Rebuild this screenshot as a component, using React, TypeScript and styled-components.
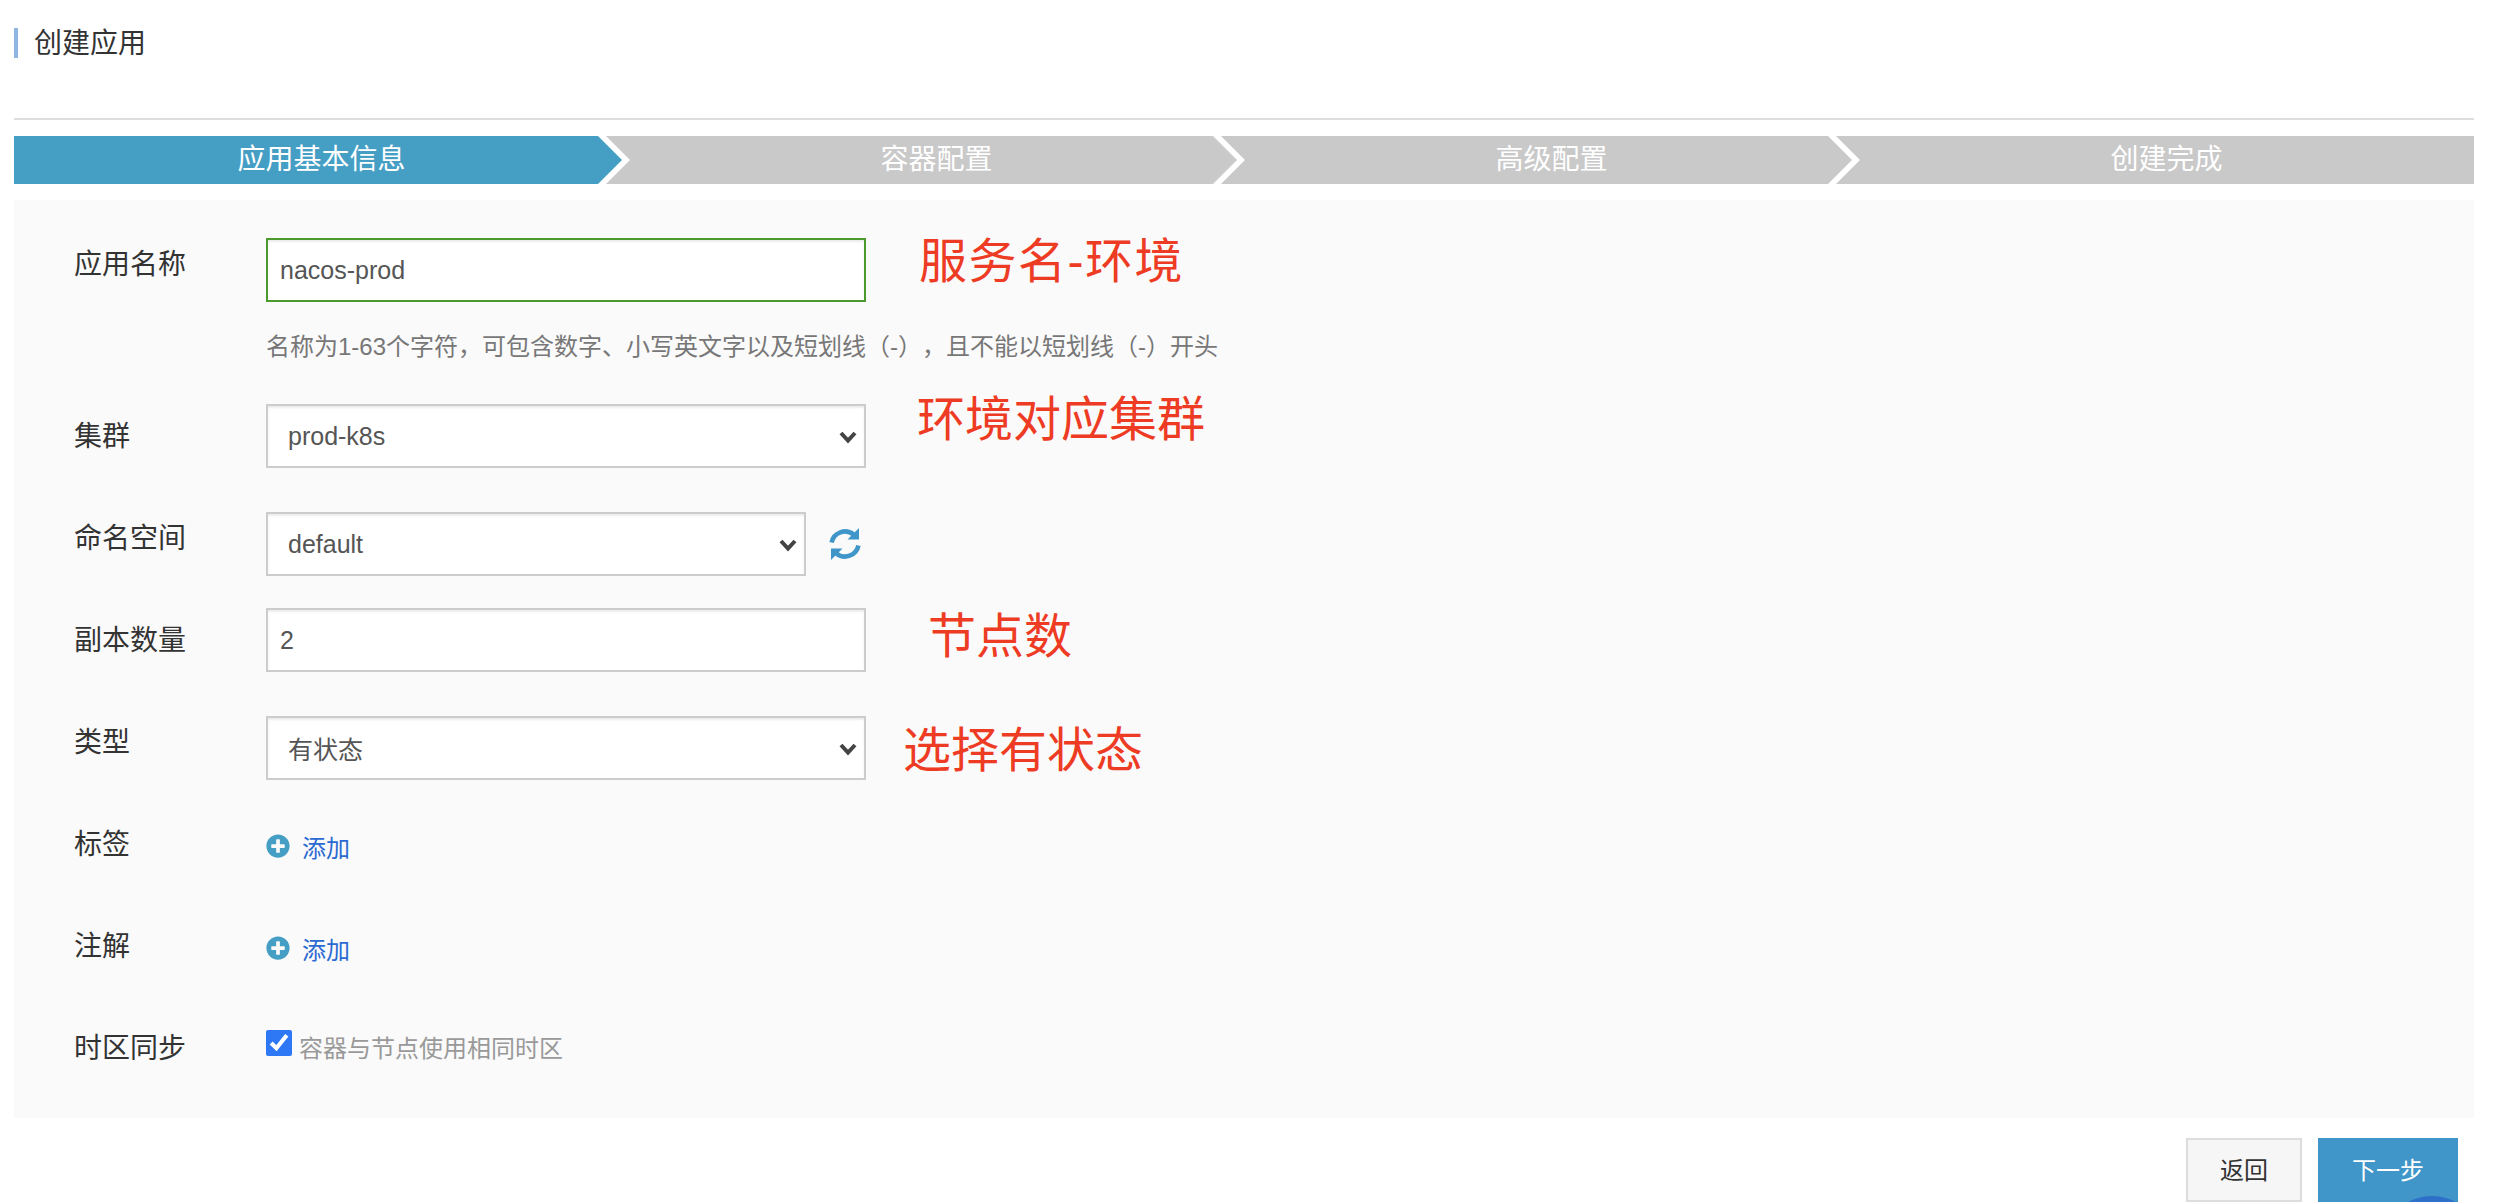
import React from 'react';
import styled, { createGlobalStyle } from 'styled-components';
import { FaPlusCircle } from 'react-icons/fa';

const GlobalStyle = createGlobalStyle`
  html, body {
    margin: 0;
    height: 1202px;
    overflow: hidden;
    background: #fff;
  }
  body {
    font-family: "Liberation Sans", "Noto Sans CJK SC", sans-serif;
    color: #333;
  }
`;

const Page = styled.div`
  padding: 28px 20px 0 14px;
`;

const Title = styled.h1`
  margin: 0;
  height: 30px;
  padding-left: 16px;
  border-left: 4px solid #8fb6e2;
  font-size: 28px;
  font-weight: normal;
  line-height: 32px;
  color: #333;
`;

const Divider = styled.div`
  height: 2px;
  margin: 60px 0 16px;
  background: #ddd;
`;

const Steps = styled.div`
  isolation: isolate;
  display: grid;
  grid-template-columns: repeat(4, 1fr);
  height: 48px;
`;

const Step = styled.div<{ $active?: boolean }>`
  position: relative;
  font-size: 28px;
  line-height: 48px;
  text-align: center;
  color: #fff;

  &::before {
    content: '';
    position: absolute;
    z-index: -1;
    top: 0;
    bottom: 0;
    left: -23px;
    right: 7px;
    background: ${p => (p.$active ? '#459ec4' : '#c9c9c9')};
    clip-path: polygon(0 0, calc(100% - 24px) 0, 100% 50%, calc(100% - 24px) 100%, 0 100%, 24px 50%);
  }

  &:first-child::before {
    left: 0;
    clip-path: polygon(0 0, calc(100% - 24px) 0, 100% 50%, calc(100% - 24px) 100%, 0 100%);
  }

  &:last-child::before {
    right: 0;
    clip-path: polygon(0 0, 100% 0, 100% 100%, 0 100%, 24px 50%);
  }
`;

const Panel = styled.div`
  margin-top: 16px;
  padding: 38px 0 42px 60px;
  background: #fafafa;
`;

const Row = styled.div<{ $mt?: number }>`
  position: relative;
  display: flex;
  align-items: flex-start;
  margin-top: ${p => p.$mt ?? 0}px;
`;

const Label = styled.label<{ $top: number }>`
  flex: 0 0 192px;
  padding-top: ${p => p.$top + 2}px;
  font-size: 28px;
  line-height: 40px;
  color: #333;
`;

const Field = styled.div`
  display: flex;
  flex-direction: column;
`;

const TextInput = styled.input<{ $ok?: boolean }>`
  box-sizing: border-box;
  width: 600px;
  height: 64px;
  padding: 0 12px;
  border: 2px solid ${p => (p.$ok ? '#4a9a2e' : '#ccc')};
  border-radius: 0;
  outline: none;
  background: #fff;
  box-shadow: inset 0 2px 2px rgba(0, 0, 0, 0.075);
  font-family: inherit;
  font-size: 25px;
  color: #555;
`;

const Help = styled.div`
  margin-top: 25px;
  font-size: 24px;
  line-height: 40px;
  text-spacing-trim: space-all;
  white-space: nowrap;
  color: #777;
`;

const SelectWrap = styled.div<{ $width: number }>`
  position: relative;
  width: ${p => p.$width}px;
  height: 64px;
`;

const Select = styled.select<{ $cjk?: boolean }>`
  appearance: none;
  box-sizing: border-box;
  width: 100%;
  height: 100%;
  padding: ${p => (p.$cjk ? '3px' : '0')} 40px 0 20px;
  border: 2px solid #ccc;
  border-radius: 0;
  outline: none;
  background: #fff;
  box-shadow: inset 0 2px 2px rgba(0, 0, 0, 0.075);
  font-family: inherit;
  font-size: 25px;
  color: #555;
`;

const Caret = styled.svg`
  position: absolute;
  top: 26px;
  right: 8px;
  width: 20px;
  height: 14px;
  pointer-events: none;
`;

const RefreshIcon = styled.svg`
  flex: none;
  width: 32px;
  height: 32px;
  margin: 16px 0 0 23px;
  color: #4096c8;
`;

const AddLink = styled.a`
  display: flex;
  align-items: center;
  gap: 12px;
  height: 68px;
  font-size: 24px;
  color: #2a6ad2;
  svg {
    font-size: 24px;
    color: #459ec4;
  }
`;

const CheckLine = styled.label`
  display: flex;
  align-items: center;
  gap: 7px;
  height: 60px;
  font-size: 24px;
  color: #999;
`;

const Check = styled.input`
  width: 26px;
  height: 26px;
  margin: -6px 0 0;
  accent-color: #2f78f5;
`;

const Note = styled.span<{ $left: number; $top: number; $track?: number }>`
  position: absolute;
  left: ${p => p.$left}px;
  top: ${p => p.$top}px;
  font-size: 48px;
  line-height: 60px;
  letter-spacing: ${p => p.$track ?? 0}px;
  white-space: nowrap;
  color: #ee3b23;
`;

const Footer = styled.div`
  display: flex;
  justify-content: flex-end;
  gap: 16px;
  margin-top: 20px;
  padding-right: 16px;
`;

const Button = styled.button<{ $primary?: boolean }>`
  box-sizing: border-box;
  width: ${p => (p.$primary ? 140 : 116)}px;
  height: 64px;
  padding: 0 0 4px;
  border: ${p => (p.$primary ? 'none' : '2px solid #ddd')};
  border-radius: 0;
  background: ${p => (p.$primary ? '#4096c8' : '#f6f6f6')};
  font-family: inherit;
  font-size: 24px;
  color: ${p => (p.$primary ? '#fff' : '#333')};
`;

const HelpBubble = styled.div`
  position: fixed;
  right: 12px;
  bottom: -94px;
  width: 100px;
  height: 100px;
  border-radius: 50%;
  background: #2e6fc9;
`;

const chevron = (
  <Caret viewBox="0 0 20 14">
    <polyline points="3,3 10,10.5 17,3" fill="none" stroke="#444" strokeWidth="4" />
  </Caret>
);

const stepNames = ['应用基本信息', '容器配置', '高级配置', '创建完成'];

const App: React.FC = () => {
  return (
    <Page>
      <GlobalStyle />
      <Title>创建应用</Title>
      <Divider />

      <Steps>
        {stepNames.map((name, index) => (
          <Step key={name} $active={index === 0}>
            {name}
          </Step>
        ))}
      </Steps>

      <Panel>
        <Row>
          <Label $top={5}>应用名称</Label>
          <Field>
            <TextInput $ok defaultValue="nacos-prod" />
            <Help>名称为1-63个字符，可包含数字、小写英文字以及短划线（-），且不能以短划线（-）开头</Help>
          </Field>
          <Note $left={845} $top={-6} $track={1.5}>服务名-环境</Note>
        </Row>

        <Row $mt={37}>
          <Label $top={11}>集群</Label>
          <SelectWrap $width={600}>
            <Select defaultValue="prod-k8s">
              <option>prod-k8s</option>
            </Select>
            {chevron}
          </SelectWrap>
          <Note $left={843} $top={-14}>环境对应集群</Note>
        </Row>

        <Row $mt={44}>
          <Label $top={5}>命名空间</Label>
          <SelectWrap $width={540}>
            <Select defaultValue="default">
              <option>default</option>
            </Select>
            {chevron}
          </SelectWrap>
          <RefreshIcon viewBox="0 0 32 32">
            <path d="M2.6 14.5A13.6 13.6 0 0 1 24.6 6.6" fill="none" stroke="currentColor" strokeWidth="4.6" />
            <polygon points="30,0 30,11.5 18.5,11.5" fill="currentColor" />
            <path d="M29.4 17.5A13.6 13.6 0 0 1 7.4 25.4" fill="none" stroke="currentColor" strokeWidth="4.6" />
            <polygon points="2,32 2,20.5 13.5,20.5" fill="currentColor" />
          </RefreshIcon>
        </Row>

        <Row $mt={32}>
          <Label $top={11}>副本数量</Label>
          <TextInput defaultValue="2" />
          <Note $left={854} $top={-1}>节点数</Note>
        </Row>

        <Row $mt={44}>
          <Label $top={5}>类型</Label>
          <SelectWrap $width={600}>
            <Select $cjk defaultValue="有状态">
              <option>有状态</option>
            </Select>
            {chevron}
          </SelectWrap>
          <Note $left={829} $top={5}>选择有状态</Note>
        </Row>

        <Row $mt={32}>
          <Label $top={11}>标签</Label>
          <AddLink>
            <FaPlusCircle />
            添加
          </AddLink>
        </Row>

        <Row $mt={34}>
          <Label $top={11}>注解</Label>
          <AddLink>
            <FaPlusCircle />
            添加
          </AddLink>
        </Row>

        <Row $mt={34}>
          <Label $top={11}>时区同步</Label>
          <CheckLine>
            <Check type="checkbox" defaultChecked />
            容器与节点使用相同时区
          </CheckLine>
        </Row>
      </Panel>

      <Footer>
        <Button>返回</Button>
        <Button $primary>下一步</Button>
      </Footer>
      <HelpBubble />
    </Page>
  );
};

export default App;
